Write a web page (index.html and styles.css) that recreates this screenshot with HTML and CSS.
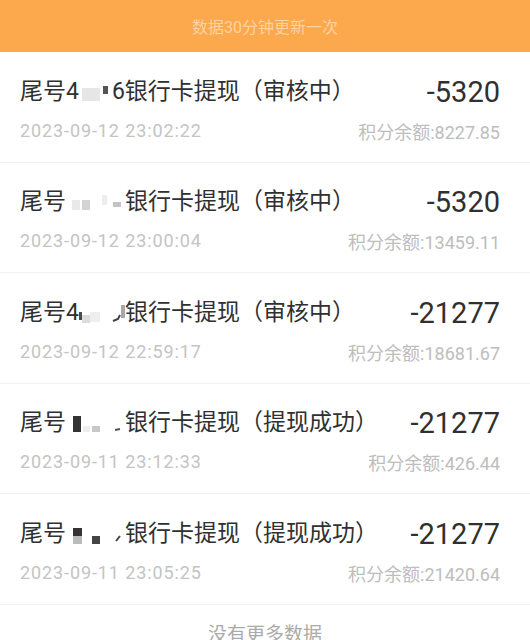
FILE: index.html
```html
<!DOCTYPE html>
<html lang="zh-CN">
<head>
<meta charset="utf-8">
<title>提现记录</title>
<link rel="stylesheet" href="styles.css">
</head>
<body>
<div class="banner">数据30分钟更新一次</div>
<ul class="list">
  <li class="row">
    <div class="line">
      <div class="title">尾号4<svg class="mask" width="33" height="30" viewBox="0 0 33 30"><rect x="3" y="11" width="18" height="13" fill="#e6e6e6"/><rect x="24" y="9" width="5" height="8" fill="#555"/></svg>6银行卡提现（审核中）</div>
      <div class="amount">-5320</div>
    </div>
    <div class="line sub">
      <div class="date">2023-09-12 23:02:22</div>
      <div class="balance">积分余额:8227.85</div>
    </div>
  </li>
  <li class="row">
    <div class="line">
      <div class="title">尾号<svg class="mask" width="59" height="30" viewBox="0 0 59 30"><rect x="6" y="13" width="8" height="10" fill="#e9e9e9"/><rect x="16" y="13" width="8" height="10" fill="#d4d4d4"/><rect x="36" y="8" width="5" height="10" fill="#ededed"/><rect x="47" y="15" width="8" height="5" fill="#c4c4c4"/></svg>银行卡提现（审核中）</div>
      <div class="amount">-5320</div>
    </div>
    <div class="line sub">
      <div class="date">2023-09-12 23:00:04</div>
      <div class="balance">积分余额:13459.11</div>
    </div>
  </li>
  <li class="row">
    <div class="line">
      <div class="title">尾号4<svg class="mask" width="46" height="30" viewBox="0 0 46 30"><rect x="0" y="14" width="3" height="8" fill="#4a4a4a"/><rect x="3" y="17" width="8" height="8" fill="#dcdcdc"/><rect x="11" y="14" width="10" height="10" fill="#eeeeee"/><path d="M34 23 L39 21 L41 17" stroke="#444" stroke-width="2" fill="none"/><rect x="42" y="7" width="4" height="13" fill="#a8a8a8"/></svg>银行卡提现（审核中）</div>
      <div class="amount">-21277</div>
    </div>
    <div class="line sub">
      <div class="date">2023-09-12 22:59:17</div>
      <div class="balance">积分余额:18681.67</div>
    </div>
  </li>
  <li class="row">
    <div class="line">
      <div class="title">尾号<svg class="mask" width="59" height="30" viewBox="0 0 59 30"><rect x="7" y="8" width="8" height="16" fill="#333"/><rect x="17" y="18" width="7" height="6" fill="#eeeeee"/><rect x="26" y="18" width="8" height="6" fill="#c8c8c8"/><path d="M49 22 L54 21" stroke="#555" stroke-width="2" fill="none"/></svg>银行卡提现（提现成功）</div>
      <div class="amount">-21277</div>
    </div>
    <div class="line sub">
      <div class="date">2023-09-11 23:12:33</div>
      <div class="balance">积分余额:426.44</div>
    </div>
  </li>
  <li class="row">
    <div class="line">
      <div class="title">尾号<svg class="mask" width="59" height="30" viewBox="0 0 59 30"><rect x="7" y="9" width="9" height="8" fill="#333"/><rect x="7" y="17" width="9" height="8" fill="#bbbbbb"/><rect x="26" y="17" width="8" height="8" fill="#444"/><path d="M50 22 L54 17" stroke="#444" stroke-width="2" fill="none"/></svg>银行卡提现（提现成功）</div>
      <div class="amount">-21277</div>
    </div>
    <div class="line sub">
      <div class="date">2023-09-11 23:05:25</div>
      <div class="balance">积分余额:21420.64</div>
    </div>
  </li>
</ul>
<div class="footer">没有更多数据</div>
</body>
</html>
```

FILE: styles.css
```css
html, body {
  margin: 0;
  padding: 0;
  background: #ffffff;
}

body {
  font-family: Roboto, "Noto Sans CJK SC", sans-serif;
  width: 530px;
  overflow: hidden;
}

.banner {
  height: 52px;
  background: #fca84c;
  color: #fdd3a4;
  font-size: 16px;
  display: flex;
  align-items: center;
  justify-content: center;
}

.list {
  list-style: none;
  margin: 0;
  padding: 0;
}

.row {
  display: flex;
  flex-direction: column;
  gap: 12px;
  padding: 24.5px 30px 17px 20px;
  border-bottom: 1px solid #f1f1f1;
}

.line {
  display: flex;
  justify-content: space-between;
  align-items: flex-start;
  white-space: nowrap;
}

.title {
  font-size: 23px;
  line-height: 30px;
  color: #303030;
}

.mask {
  vertical-align: top;
}

.amount {
  font-size: 29px;
  line-height: 30px;
  color: #303030;
}

.date {
  font-size: 18px;
  line-height: 24px;
  color: #c4c4c4;
  letter-spacing: 0.9px;
}

.balance {
  font-size: 18px;
  line-height: 24px;
  color: #bdbdbd;
  padding-top: 2px;
}

.footer {
  text-align: center;
  font-size: 19px;
  line-height: 26px;
  color: #aaaaaa;
  padding-top: 17px;
}
```
